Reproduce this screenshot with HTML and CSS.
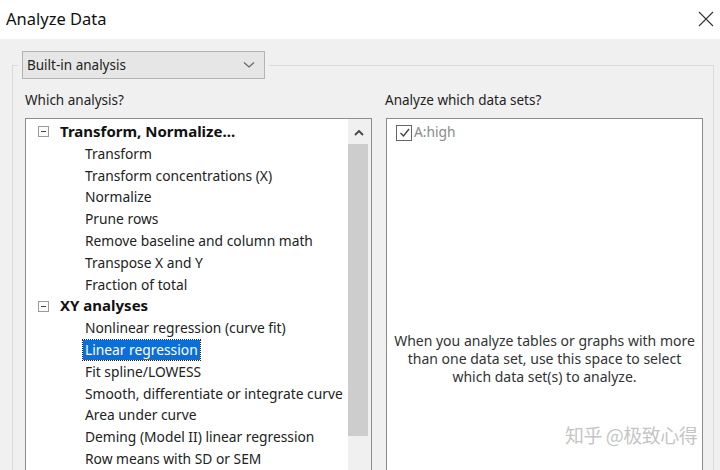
FILE: index.html
```html
<!DOCTYPE html>
<html>
<head>
<meta charset="utf-8">
<link rel="stylesheet" href="styles.css">
</head>
<body>
<div class="window">
  <div class="titlebar">
    <span class="title">Analyze Data</span>
    <svg class="close" width="16" height="16" viewBox="0 0 16 16"><path d="M1 1 L15 15 M15 1 L1 15" stroke="#333" stroke-width="1.1" fill="none"/></svg>
  </div>
  <div class="body">
    <fieldset class="group">
      <legend class="legend">
        <div class="combo">
          <span>Built-in analysis</span>
          <svg width="12" height="8" viewBox="0 0 12 8"><path d="M1 1.5 L6 6 L11 1.5" stroke="#666" stroke-width="1.2" fill="none"/></svg>
        </div>
      </legend>
      <div class="cols">
        <div class="col left">
          <div class="label">Which analysis?</div>
          <div class="listbox tree">
            <div class="tree-items">
              <div class="row head"><span class="toggle"></span>Transform, Normalize...</div>
              <div class="row item">Transform</div>
              <div class="row item">Transform concentrations (X)</div>
              <div class="row item">Normalize</div>
              <div class="row item">Prune rows</div>
              <div class="row item">Remove baseline and column math</div>
              <div class="row item">Transpose X and Y</div>
              <div class="row item">Fraction of total</div>
              <div class="row head"><span class="toggle"></span>XY analyses</div>
              <div class="row item">Nonlinear regression (curve fit)</div>
              <div class="row item"><span class="selected">Linear regression</span></div>
              <div class="row item">Fit spline/LOWESS</div>
              <div class="row item">Smooth, differentiate or integrate curve</div>
              <div class="row item">Area under curve</div>
              <div class="row item">Deming (Model II) linear regression</div>
              <div class="row item">Row means with SD or SEM</div>
            </div>
            <div class="scrollbar">
              <svg class="arrow" width="10" height="7" viewBox="0 0 10 7"><path d="M1 6 L5 2 L9 6" stroke="#444" stroke-width="1.8" fill="none"/></svg>
              <div class="thumb"></div>
            </div>
          </div>
        </div>
        <div class="col right">
          <div class="label">Analyze which data sets?</div>
          <div class="listbox sets">
            <div class="check-row">
              <span class="checkbox"><svg width="13" height="13" viewBox="0 0 13 13"><path d="M2.5 7 L5.5 10 L11 3" stroke="#444" stroke-width="1.4" fill="none"/></svg></span>
              <span class="check-label">A:high</span>
            </div>
            <div class="help">When you analyze tables or graphs with more than one data set, use this space to select which data set(s) to analyze.</div>
            <div class="watermark">知乎 @极致心得</div>
          </div>
        </div>
      </div>
    </fieldset>
  </div>
</div>
</body>
</html>
```
FILE: styles.css
```css
html, body {
  margin: 0;
  padding: 0;
}
body {
  width: 720px;
  height: 470px;
  overflow: hidden;
  font-family: "Noto Sans", "Open Sans", sans-serif;
  color: #1a1a1a;
}
.window {
  width: 720px;
  height: 470px;
  display: flex;
  flex-direction: column;
}
.titlebar {
  height: 39px;
  flex: none;
  background: #ffffff;
  display: flex;
  align-items: center;
  justify-content: space-between;
  padding: 0 6px 0 6px;
}
.title {
  font-size: 16.5px;
  color: #111;
  margin-top: -3px;
}
.close {
  margin-right: 0;
  margin-top: -2px;
}
.body {
  flex: 1;
  background: #f0f0f0;
  padding: 12px 6px 0 12px;
  overflow: hidden;
}
.group {
  margin: 0;
  border: 1px solid #dadada;
  border-bottom: none;
  padding: 0 10px 0 12px;
  height: 460px;
  min-width: 0;
}
.legend {
  padding: 0 4px;
  margin-left: -7px;
}
.combo {
  width: 228px;
  height: 26px;
  border: 1px solid #b4b4b4;
  background: #e6e6e6;
  display: flex;
  align-items: center;
  justify-content: space-between;
  padding: 0 9px 0 4px;
  box-sizing: content-box;
  font-size: 13.5px;
  color: #222;
}
.combo span {
  margin-top: -1px;
}
.cols {
  display: flex;
  gap: 14px;
  margin-top: 12px;
}
.col {
  display: flex;
  flex-direction: column;
}
.left {
  width: 347px;
}
.right {
  flex: 1;
}
.label {
  font-size: 13.5px;
  color: #222;
  line-height: 18px;
  margin-bottom: 9px;
}
.right .label {
  margin-left: -1px;
}
.listbox {
  background: #ffffff;
  border: 1px solid #8c8c8c;
  height: 400px;
}
.tree {
  display: flex;
}
.tree-items {
  flex: 1;
  padding-top: 2px;
  font-size: 13.8px;
  white-space: nowrap;
  overflow: hidden;
}
.row {
  height: 21.8px;
  line-height: 21.8px;
  display: flex;
  align-items: center;
}
.head {
  font-weight: bold;
  font-size: 15px;
  padding-left: 12px;
  color: #111;
}
.toggle {
  width: 9px;
  height: 9px;
  border: 1px solid #9a9a9a;
  margin-right: 11px;
  position: relative;
  flex: none;
  background: #fafafa;
}
.toggle::after {
  content: "";
  position: absolute;
  left: 2px;
  top: 4px;
  width: 5px;
  height: 1px;
  background: #444;
}
.item {
  padding-left: 59px;
  color: #222;
}
.selected {
  background: #0a6fd8;
  color: #ffffff;
  outline: 1px dotted #222;
  padding: 0 2px;
  margin-left: -2px;
  line-height: 20px;
}
.scrollbar {
  width: 23px;
  flex: none;
  background: #f0f0f0;
  display: flex;
  flex-direction: column;
  align-items: flex-start;
}
.arrow {
  margin: 10px 0 8px 6px;
}
.thumb {
  width: 20px;
  height: 292px;
  background: #cdcdcd;
}
.sets {
  display: flex;
  flex-direction: column;
  position: relative;
}
.check-row {
  display: flex;
  align-items: center;
  padding: 5px 0 0 9px;
}
.checkbox {
  width: 14px;
  height: 14px;
  border: 1px solid #666;
  display: flex;
  align-items: center;
  justify-content: center;
  margin-right: 2px;
}
.check-label {
  font-size: 13.8px;
  color: #8a8a8a;
  margin-top: -2px;
}
.help {
  margin-top: 191px;
  padding: 0 4px;
  text-align: center;
  font-size: 14px;
  line-height: 18px;
  color: #333;
}
.watermark {
  position: absolute;
  left: 178px;
  top: 302px;
  font-family: "Noto Sans CJK SC", sans-serif;
  font-size: 19px;
  color: rgba(170, 170, 170, 0.7);
  letter-spacing: -0.5px;
}
```
